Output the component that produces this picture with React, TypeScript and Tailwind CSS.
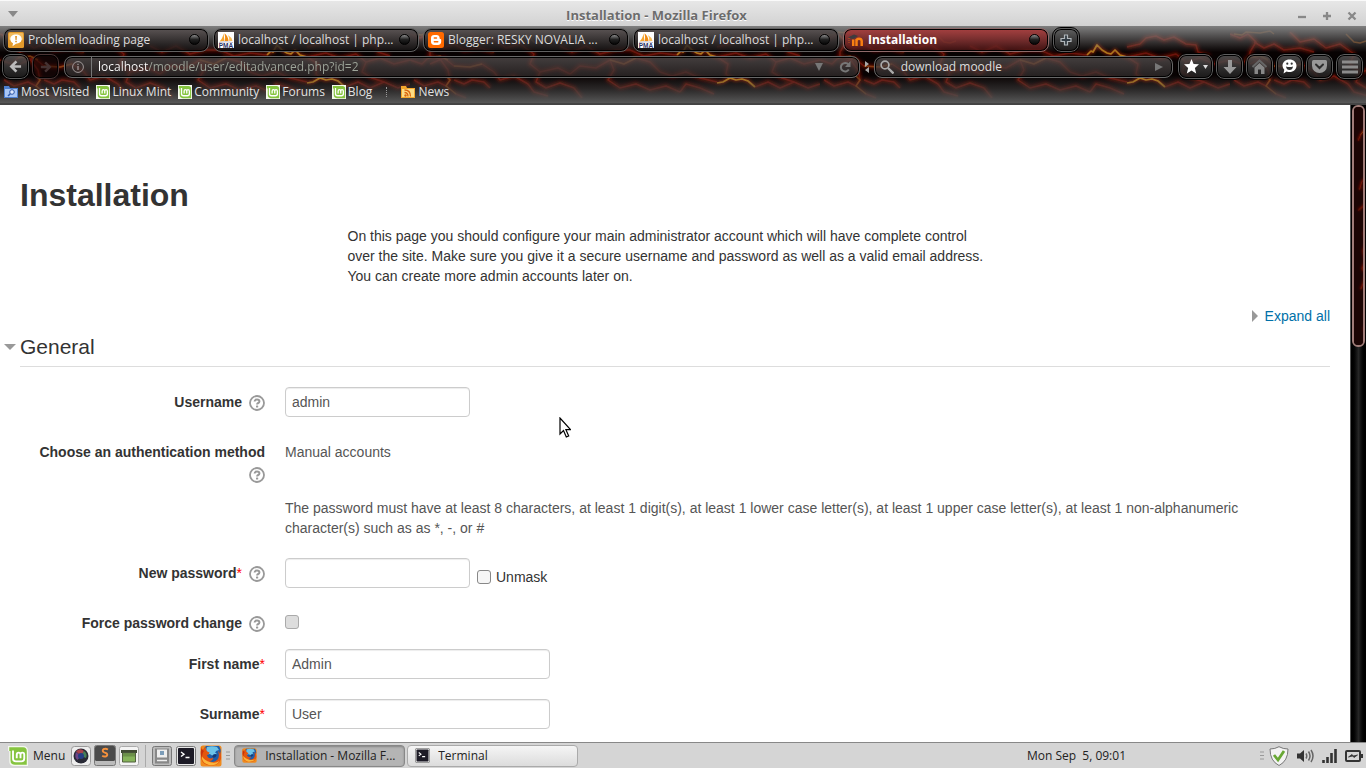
import React from "react";

const BOLTS = [
  "M0 34 L12 38 L20 30 L30 33 L38 44 L40 54 L36 60 L46 68 L56 72",
  "M20 38 L34 32 L44 40 L60 41 L72 38 L84 46 L90 54 L104 50 L118 58 L124 66 L138 70",
  "M60 6 L70 16 L84 13 L96 22 L110 18 L124 28 L120 38 L130 46 L148 42 L160 48",
  "M130 46 L126 56 L136 62 L150 57 L164 62 L172 72",
  "M160 48 L170 40 L186 42 L200 34 L214 38 L226 32 L240 36 L250 46",
  "M150 20 L162 26 L176 20 L190 28 L206 24 L220 24 L234 30 L250 27 L267 29",
  "M200 34 L204 44 L198 54 L210 62 L226 58 L240 64 L256 60 L270 66",
  "M250 46 L262 50 L276 46 L290 52 L307 56",
  "M307 31 L318 38 L316 48 L320 52",
  "M345 61 L358 56 L370 62 L384 56 L398 62 L410 58",
  "M307 21 L320 18 L326 12 L336 10 L344 14 L354 11 L366 18 L376 19 L378 26 L390 30",
  "M307 31 L326 27 L340 32 L356 28 L366 36 L380 32 L394 38 L410 34",
  "M366 36 L362 46 L372 52 L384 56",
  "M24 16 L34 22 L44 18 L54 24 L70 22 L84 26",
  "M44 54 L54 58 L62 54 L74 56 L80 62",
  "M4 54 L14 60 L28 56 L36 60",
  "M0 8 L10 12 L18 8 L26 16 L20 26 L20 30",
  "M270 66 L276 58 L290 62 L304 68",
];
const HOT = [
  "M267 29 L271 25 L273 26 L277 19 L282 24 L287 27 L291 28 L295 24 L300 29 L307 31",
  "M307 57 L313 56 L320 52 L326 54 L332 53 L338 55 L345 61",
];
const WARM = [
  "M44 40 L60 41 L72 38",
  "M36 50 L40 54 L36 60 L46 68",
  "M18 32 L30 30 L38 34",
  "M4 8 L12 9 L16 6 L30 7 L40 5 L44 8",
  "M116 8 L124 16 L130 17 L136 15",
  "M200 34 L214 38 L226 32",
];

function Lava({ id, className, vertical }: { id: string; className: string; vertical?: boolean }) {
  return (
    <svg className={className} width="100%" height="100%" aria-hidden="true">
      <defs>
        <filter id={id + "b"} x="-5%" y="-20%" width="110%" height="140%"><feGaussianBlur stdDeviation="1.8" /></filter>
        <filter id={id + "s"} x="-5%" y="-20%" width="110%" height="140%"><feGaussianBlur stdDeviation=".6" /></filter>
        <pattern id={id} width="410" height="79" patternUnits="userSpaceOnUse" patternTransform={vertical ? "rotate(90) scale(.6)" : undefined}>
          <rect width="410" height="79" fill={vertical ? "#1c0504" : "#080202"} />
          <g fill="none" strokeLinejoin="round">
            <g filter={`url(#${id}b)`} stroke="#6a0d06" strokeWidth="5" opacity=".75">{BOLTS.map((d) => <path key={d} d={d} />)}</g>
            <g filter={`url(#${id}s)`}>
              <g stroke="#8a1c10" strokeWidth="1.5" opacity=".75">{BOLTS.map((d) => <path key={d} d={d} />)}</g>
              <g stroke="#9a5014" strokeWidth="1.5" opacity=".75">{WARM.map((d) => <path key={d} d={d} />)}</g>
            </g>
            <g filter={`url(#${id}b)`} stroke="#9a2008" strokeWidth="3.500" opacity=".9">{HOT.map((d) => <path key={d} d={d} />)}</g>
            <g filter={`url(#${id}s)`} stroke="#c9881c" strokeWidth="1.700">{HOT.map((d) => <path key={d} d={d} />)}</g>
          </g>
        </pattern>
      </defs>
      <rect width="100%" height="100%" fill={`url(#${id})`} />
    </svg>
  );
}

function Mint({ className }: { className: string }) {
  return (
    <svg className={className} viewBox="0 0 16 16" aria-hidden="true">
      <path d="M0 0h12q4 0 4 4v12H5q-4 0-4-4V4H0z" fill="#f4f8ee" />
      <path d="M1 1h11q3 0 3 3v11H5.500q-3.500 0-3.500-3.500V4H1z" fill="#86c440" />
      <path d="M4 3.500v6.500q0 2.300 2.300 2.300h4.400q2.300 0 2.300-2.300V7q0-1.700-1.500-1.700T10 7v2.700M10 7q0-1.700-1.500-1.700T7 7v2.700" fill="none" stroke="#fff" strokeWidth="1.500" />
    </svg>
  );
}

function Warning() {
  return (
    <svg className="size-4 shrink-0" viewBox="0 0 16 16" aria-hidden="true">
      <rect width="16" height="16" rx="1.500" fill="#e39a2c" /><rect x="1" y="1" width="14" height="7" rx="1" fill="#f0b95c" />
      <path d="M8 2.500c3.500 0 5.700 1.900 5.700 4.600S11.500 11.700 8 11.700l-3.500 2.500.5-3C3.300 10.400 2.300 9 2.300 7.100 2.300 4.400 4.500 2.500 8 2.500z" fill="#fff" />
      <path d="M7.200 4h1.700l-.3 4H7.500zM7.300 8.800h1.500v1.400H7.300z" fill="#d98a1c" />
    </svg>
  );
}

function Pma() {
  return (
    <svg className="size-4 shrink-0" viewBox="0 0 16 16" aria-hidden="true">
      <rect width="16" height="16" fill="#fff" />
      <path d="M1.500 9.500Q4.500 7 5.500 1.500L6.500 9z" fill="#f7a52b" /><path d="M7 9Q7.500 5 6.500 1.200q3.500 2.500 4 7.800z" fill="#f08a12" /><path d="M11.200 9q.3-3-1.200-6 3.500 2 4.500 6z" fill="#f9bd5a" />
      <path d="M1 10.500q7-1.500 14 0" stroke="#b9b9c8" fill="none" />
      <text x="8" y="15.700" textAnchor="middle" fontFamily="Liberation Sans, sans-serif" fontWeight="bold" fontSize="6.500" fill="#2d3468">PMA</text>
    </svg>
  );
}

function Blogger() {
  return (
    <svg className="size-4 shrink-0" viewBox="0 0 16 16" aria-hidden="true">
      <rect width="16" height="16" rx="2.500" fill="#ff6a00" />
      <path d="M6.200 3h2.400c1.900 0 3 1.200 3 2.900 0 .8.300 1.100.9 1.100.4 0 .7.300.7.700v2.100c0 2-1.300 3.200-3.200 3.200H6.200C4.200 13 3 11.800 3 9.800V6.200C3 4.200 4.200 3 6.200 3z" fill="#fff" />
      <path d="M6.300 6h2.200M6.300 9.800h3.500" stroke="#ff6a00" strokeWidth="1.400" strokeLinecap="round" />
    </svg>
  );
}

function Moodle() {
  return (
    <svg className="size-4 shrink-0" viewBox="0 0 16 16" aria-hidden="true">
      <path d="M5.200 14V7.500M8.500 14V9q0-2.300 2.500-2.300t2.700 2.300V14M8.500 14V7" stroke="#f98012" strokeWidth="2.500" fill="none" />
      <path d="M0 5.500L6 2.500 10 4 5 7z" fill="#3c3c3f" /><path d="M1 6v5" stroke="#d5641a" strokeWidth=".8" strokeDasharray="1 1" />
    </svg>
  );
}

function Firefox({ className }: { className: string }) {
  return (
    <svg className={className} viewBox="0 0 22 22" aria-hidden="true">
      <rect x=".5" y=".5" width="21" height="21" rx="2.500" fill="#f08a1c" />
      <path d="M6 1h13q2.500 3 1.500 8-2 10-9.500 10T2 10Q2.500 4 6 1z" fill="#1f5da8" />
      <path d="M7 2q5-1.500 10 0l2 3q-3 0-4 2.500 1.500.5 2 2-3-.5-4.500 1.500Q10 8 7.500 9.500 5 7 7 2z" fill="#6cc3e8" />
      <path d="M12 11q2-3 5-1.500-1 3-3.500 3.500z" fill="#123a78" />
      <path d="M1 1.500q.8 2.500 2 3Q4.500 2.500 6.500 2q-1 2 0 3.500 1 1.500 3 2-.5 2-2.500 2.500.5 3 3.500 3.500 2-.2 3-1-1 3.500-4 3.500 4.500 2.500 8-1.500 2.500-3.500.5-8.500 1.500 1 2 3 .3-3-1-5.500Q21.500 8 21 14q-2 6.500-10 6.500Q1.500 20 1 12z" fill="#e4560e" />
      <path d="M1.800 11Q1.500 18 9 20q7 1.200 10.500-4-4 2.600-9 1.200Q4 15.500 1.800 11z" fill="#fbb43a" />
      <path d="M1.200 4Q0 10 2 13q0-5 2-7z" fill="#c8320c" />
    </svg>
  );
}

function Terminal({ className }: { className: string }) {
  return (
    <svg className={className} viewBox="0 0 20 20" aria-hidden="true">
      <rect x=".5" y=".5" width="19" height="19" rx="2" fill="#e8e8e8" stroke="#777" /><rect x="2" y="2" width="16" height="16" rx="1" fill="#1d1b26" />
      <path d="M5 6l3 2.200L5 10.500M9.500 11.500h4" stroke="#fff" strokeWidth="1.400" fill="none" />
    </svg>
  );
}

function Help({ label }: { label: string }) {
  return (
    <a href="#help" aria-label={`Help with ${label}`} className="block size-4 shrink-0">
      <svg viewBox="0 0 16 16" className="size-4" aria-hidden="true">
        <circle cx="8" cy="8" r="7" fill="#fff" stroke="#999" strokeWidth="1.800" />
        <path d="M5.600 6.600Q5.600 4.600 8 4.600t2.400 1.800Q10.400 7.500 9.200 8 8.100 8.500 8.100 9.500" fill="none" stroke="#999" strokeWidth="2" />
        <rect x="7" y="10.500" width="2.200" height="2" rx=".6" fill="#999" />
      </svg>
    </a>
  );
}

const pill = "border border-[#5e5e5e] outline outline-black bg-linear-to-b from-[#5c5c5ccc] to-[#1c1c1cdd] shadow-[inset_0_0_0_1px_#000]";

function Tab({ icon, title, active }: { icon: React.ReactNode; title: string; active?: boolean }) {
  return (
    <div className={"flex h-6 w-[206px] min-w-0 items-center rounded-lg border pr-2 pl-1 shadow-[inset_0_0_0_1px_#000] " + (active ? "border-[#8d6a6a] bg-linear-to-b from-[#a83c3cf0] to-[#4a1212b8]" : "border-[#606060] bg-linear-to-b from-[#544c4cd0] to-[#151313c0]")}>
      <button role="tab" aria-selected={!!active} className={"flex min-w-0 flex-1 items-center gap-1 text-left " + (active ? "font-bold text-white" : "text-[#dcdcdc]")}>
        {icon}
        <span className="truncate leading-5">{title}</span>
      </button>
      <button aria-label={`Close ${title}`} className="ml-1 size-[11px] shrink-0 rounded-full border border-black bg-linear-to-b from-[#909090] via-[#222] to-[#080808]" />
    </div>
  );
}

function NavButton({ label, wide, dim, children }: { label: string; wide?: boolean; dim?: boolean; children: React.ReactNode }) {
  return (
    <button aria-label={label} className={"flex h-[25px] shrink-0 items-center justify-center gap-1 rounded-lg " + (wide ? "w-[35px] " : "w-[27px] ") + (dim ? "border border-[#4a3535] bg-[#1a080890] shadow-[inset_0_0_0_1px_#000]" : pill)}>
      {children}
    </button>
  );
}

function Label({ htmlFor, text, required, help }: { htmlFor?: string; text: string; required?: boolean; help?: boolean }) {
  return (
    <div className="flex w-[245px] shrink-0 flex-wrap items-start justify-end gap-x-[7px] gap-y-[2px] pt-[5px]">
      <label htmlFor={htmlFor} className="font-bold">{text}{required && <span className="font-normal text-[#f00]">*</span>}</label>
      {help && <span className="pt-[3px]"><Help label={text} /></span>}
    </div>
  );
}

const field = "h-[30px] rounded border border-[#ccc] bg-white px-1.5 text-[14px] text-[#555] shadow-[inset_0_1px_1px_#00000013] outline-none";
const box = "size-[14px] shrink-0 appearance-none rounded-[3px] border";
const bar = "flex h-[22px] min-w-0 items-center rounded-lg border border-[#686868] bg-linear-to-b from-[#5b5555b8] to-[#302b2bb8] shadow-[inset_0_0_0_1px_#000]";

export default function App() {
  return (
    <div className="flex h-screen flex-col overflow-hidden bg-white font-['Open_Sans','Noto_Sans',sans-serif] text-[12px]">
      <header className="flex h-[26px] shrink-0 items-center justify-between border-t border-[#fafafa] bg-linear-to-b from-[#e7e7e7] to-[#d2d2d2] px-2">
        <button aria-label="Window menu" className="w-20">
          <svg className="h-[6px] w-[10px]" viewBox="0 0 10 6" aria-hidden="true"><path d="M0 0h10L5 6z" fill="#888" /></svg>
        </button>
        <h1 className="pt-1 pr-[72px] text-[13px] font-bold text-[#6c6c6c] [text-shadow:0_1px_0_#fff]">Installation - Mozilla Firefox</h1>
        <div className="flex items-center justify-end gap-[15px] pt-1 pr-px">
          {[["Minimize", "M1 6h8"], ["Maximize", "M1 5h8M5 1v8"], ["Close", "M1.500 1.500l7 7M8.500 1.500l-7 7"]].map(([n, d]) => (
            <button key={n} aria-label={n}><svg className="size-[10px]" viewBox="0 0 10 10" aria-hidden="true"><path d={d} stroke="#888" strokeWidth="2.300" /></svg></button>
          ))}
        </div>
      </header>

      <div className="relative isolate shrink-0 border-b-2 border-[#444]">
        <Lava id="lava" className="absolute inset-0 -z-20" />
        <div className="absolute inset-0 -z-10 bg-linear-to-b from-[#808080] from-0% via-[#00000020] via-35% to-transparent" />
        <div className="absolute inset-x-0 bottom-0 -z-10 h-7 bg-linear-to-t from-[#585858] via-[#3d3d3da0] to-transparent" />
        <div role="tablist" className="flex h-[27px] items-center gap-1 px-[3px]">
          <Tab icon={<Warning />} title="Problem loading page" />
          <Tab icon={<Pma />} title="localhost / localhost | php..." />
          <Tab icon={<Blogger />} title="Blogger: RESKY NOVALIA ..." />
          <Tab icon={<Pma />} title="localhost / localhost | php..." />
          <Tab icon={<Moodle />} title="Installation" active />
          <button aria-label="New tab" className={"flex h-6 w-[26px] items-center justify-center rounded-lg " + pill}>
            <svg className="size-3" viewBox="0 0 12 12" aria-hidden="true"><path d="M4.500 1h3v3.500H11v3H7.500V11h-3V7.500H1v-3h3.500z" fill="#303a42" stroke="#b0b6ba" strokeWidth="1.200" /></svg>
          </button>
        </div>
        <div className="flex h-[27px] items-center pr-[3px] pl-0.5">
          <div className="flex gap-[3px]">
            <NavButton label="Back"><svg className="size-[13px]" viewBox="0 0 14 14" aria-hidden="true"><path d="M8 1.500L2.500 7 8 12.500M3 7h10" fill="none" stroke="#bbb" strokeWidth="2.800" /></svg></NavButton>
            <NavButton label="Forward" dim><svg className="size-3" viewBox="0 0 14 14" aria-hidden="true"><path d="M6 1.500L11.500 7 6 12.500M11 7H1" fill="none" stroke="#443232" strokeWidth="2.800" /></svg></NavButton>
          </div>
          <div className={bar + " ml-[5px] flex-[804] pr-2"}>
            <svg className="mx-[7px] size-3 shrink-0" viewBox="0 0 12 12" aria-hidden="true"><circle cx="6" cy="6" r="5.400" fill="none" stroke="#a09898" /><path d="M6 5v4M6 2.700v1.400" stroke="#a09898" strokeWidth="1.300" /></svg>
            <span className="h-full w-px shrink-0 bg-[#777]" />
            <input aria-label="Address" defaultValue="localhost/moodle/user/editadvanced.php?id=2" className="ml-[6px] h-5 min-w-0 flex-1 bg-linear-to-r from-white from-[50px] to-[#9ea59a] to-[50px] bg-clip-text text-transparent outline-none" />
            <button aria-label="History" className="mr-4"><svg className="size-2" viewBox="0 0 8 8" aria-hidden="true"><path d="M0 0h8L4 8z" fill="#777" /></svg></button>
            <button aria-label="Reload"><svg className="size-3" viewBox="0 0 12 12" aria-hidden="true"><path d="M9.500 3.500A4.300 4.300 0 1 0 9.800 8.500" fill="none" stroke="#777" strokeWidth="2" /><path d="M11.500 0v6H6z" fill="#777" /></svg></button>
          </div>
          <svg className="mx-1 h-3 w-[6px] shrink-0" viewBox="0 0 6 12" aria-hidden="true"><path d="M1 0l4 3-4 3zM5 6v6L1 9z" fill="#aaa" /></svg>
          <div className={bar + " flex-[294] px-[5px]"}>
            <svg className="size-[14px] shrink-0" viewBox="0 0 14 14" aria-hidden="true"><circle cx="5" cy="5" r="3.900" fill="none" stroke="#aaa" strokeWidth="1.700" /><path d="M8 8l5.500 5.500" stroke="#aaa" strokeWidth="2.300" /></svg>
            <input aria-label="Search" defaultValue="download moodle" className="ml-[7px] h-5 min-w-0 flex-1 bg-transparent text-[#ddd] outline-none" />
            <button aria-label="Go" className="mr-1"><svg className="size-2" viewBox="0 0 8 8" aria-hidden="true"><path d="M0 0l8 4-8 4z" fill="#777" /></svg></button>
          </div>
          <div className="ml-[5px] flex gap-[3px]">
            <NavButton label="Bookmarks" wide>
              <svg className="size-[15px]" viewBox="0 0 16 16" aria-hidden="true"><path d="M8 0l2.200 5.200 5.800.5-4.400 3.800L13 15.500 8 12.300l-5 3.200 1.400-6L0 5.700l5.800-.5z" fill="#fff" /></svg>
              <svg className="h-1 w-[5px]" viewBox="0 0 5 4" aria-hidden="true"><path d="M0 0h5L2.500 4z" fill="#ddd" /></svg>
            </NavButton>
            <NavButton label="Downloads"><svg className="size-[14px]" viewBox="0 0 14 14" aria-hidden="true"><path d="M5 0h4v7h4.500L7 14 .5 7H5z" fill="#999" /></svg></NavButton>
            <NavButton label="Home"><svg className="size-[15px]" viewBox="0 0 15 15" aria-hidden="true"><path d="M.5 8L7.500 1.500l7 6.500" fill="none" stroke="#666" strokeWidth="2" /><path d="M2.500 8.500l5-4.500 5 4.500V15H9v-4.500H6V15H2.500z" fill="#888" /></svg></NavButton>
            <NavButton label="Hello"><svg className="size-[15px]" viewBox="0 0 15 15" aria-hidden="true"><path d="M7.500.5c4 0 7 2.700 7 6.200s-3 6.300-7 6.300c-1 0-2-.1-2.800-.5L1.500 14.500l.8-3.800A6 6 0 0 1 .5 6.700C.5 3.200 3.500.5 7.500.5z" fill="#fff" /><path d="M4 7.500q3.500 1 7 0Q10.500 11 7.500 11T4 7.500z" fill="#333" /><circle cx="5.300" cy="4.700" r="1.100" fill="#333" /><circle cx="9.700" cy="4.700" r="1.100" fill="#333" /></svg></NavButton>
            <NavButton label="Pocket"><svg className="size-[15px]" viewBox="0 0 15 15" aria-hidden="true"><path d="M1.500 1h12Q15 1 15 2.500v4.300a7.500 7.200 0 0 1-15 0V2.500Q0 1 1.500 1z" fill="#999" /><path d="M4 5.500L7.500 9 11 5.500" fill="none" stroke="#2d2d2d" strokeWidth="2" strokeLinecap="round" /></svg></NavButton>
            <NavButton label="Menu"><svg className="h-[14px] w-4" viewBox="0 0 16 14" aria-hidden="true"><path d="M0 2h16M0 7h16M0 12h16" stroke="#8c8c8c" strokeWidth="3" /></svg></NavButton>
          </div>
        </div>
        <nav aria-label="Bookmarks" className="flex h-[23px] items-center gap-[7px] px-1 text-[#e2e2e2]">
          <a href="#visited" className="flex items-center gap-[3px]">
            <svg className="size-[14px]" viewBox="0 0 14 14" aria-hidden="true"><path d="M0 1h5l1 2h8v10H0z" fill="#4d7fd0" /><rect x="1" y="4" width="12" height="8" fill="#a8c6f5" /><circle cx="8" cy="7" r="2.300" fill="#dfeaff" stroke="#2b56a8" /><path d="M6.300 8.700L4 11" stroke="#2b56a8" strokeWidth="1.500" /></svg>Most Visited
          </a>
          {["Linux Mint", "Community", "Forums", "Blog"].map((t) => (
            <a key={t} href={"#" + t} className="flex items-center gap-[2px]"><Mint className="size-[14px] shrink-0 bg-[#f4f8ee]" />{t}</a>
          ))}
          <span className="mx-[7px] h-[10px] border-l border-dotted border-[#999]" />
          <a href="#news" className="flex items-center gap-[3px]">
            <svg className="size-[14px]" viewBox="0 0 14 14" aria-hidden="true"><path d="M0 1h5l1 2h8v10H0z" fill="#f3a72c" /><rect x="1" y="4" width="12" height="8" fill="#fbdc85" /><circle cx="4.500" cy="10.500" r="1.200" fill="#d9640e" /><path d="M3.500 7.500q3.500 0 3.500 4M3.500 5q6 0 6 6.500" fill="none" stroke="#d9640e" strokeWidth="1.300" /></svg>News
          </a>
        </nav>
      </div>

      <div className="flex min-h-0 flex-1">
        <main className="min-w-0 flex-1 overflow-hidden px-5 font-['Liberation_Sans',sans-serif] text-[14px] leading-5 text-[#333]">
          <h2 className="mt-[70px] text-[32px] leading-10 font-bold">Installation</h2>
          <p className="mx-auto mt-[11px] w-1/2 pr-2">On this page you should configure your main administrator account which will have complete control over the site. Make sure you give it a secure username and password as well as a valid email address. You can create more admin accounts later on.</p>
          <div className="mt-5 flex justify-end">
            <a href="#expand" className="flex items-center gap-[7px] text-[#0070a8]"><svg className="h-3 w-[6px]" viewBox="0 0 6 12" aria-hidden="true"><path d="M0 0l6 6-6 6z" fill="#999" /></svg>Expand all</a>
          </div>
          <form>
            <h3 className="border-b border-[#ddd] pt-[2px] text-[21px] leading-[38px]">
              <button type="button" aria-expanded="true" className="-ml-4 flex items-center gap-1"><svg className="h-[6px] w-3" viewBox="0 0 12 6" aria-hidden="true"><path d="M0 0h12L6 6z" fill="#999" /></svg>General</button>
            </h3>
            <div className="mt-5 flex gap-5">
              <Label htmlFor="username" text="Username" help />
              <input id="username" defaultValue="admin" className={field + " w-[185px]"} />
            </div>
            <div className="mt-5 flex gap-5">
              <Label text="Choose an authentication method" help />
              <div className="pt-[5px] text-[#555]">Manual accounts</div>
            </div>
            <div className="mt-[15px] pr-5 pl-[265px] text-[#555]">The password must have at least 8 characters, at least 1 digit(s), at least 1 lower case letter(s), at least 1 upper case letter(s), at least 1 non-alphanumeric character(s) such as as *, -, or #</div>
            <div className="mt-5 flex gap-5">
              <Label htmlFor="password" text="New password" required help />
              <div className="flex items-center gap-[7px]">
                <input id="password" type="password" className={field + " w-[185px]"} />
                <label className="flex items-center gap-[5px] pt-2"><input type="checkbox" className={box + " border-[#888] bg-[#f6f6f6]"} />Unmask</label>
              </div>
            </div>
            <div className="mt-5 flex gap-5">
              <Label htmlFor="force" text="Force password change" help />
              <input id="force" type="checkbox" disabled className={box + " mt-[7px] border-[#aaa] bg-[#ddd]"} />
            </div>
            <div className="mt-4 flex gap-5">
              <Label htmlFor="first" text="First name" required />
              <input id="first" defaultValue="Admin" className={field + " w-[265px]"} />
            </div>
            <div className="mt-5 flex gap-5">
              <Label htmlFor="surname" text="Surname" required />
              <input id="surname" defaultValue="User" className={field + " w-[265px]"} />
            </div>
          </form>
        </main>
        <div className="w-4 shrink-0 border-l border-[#555] bg-linear-to-r from-black via-[#262626] to-black px-px" role="presentation">
          <div className="relative h-[38%] overflow-hidden rounded-md border-2 border-[#a07c78]">
            <Lava id="thumb" vertical className="absolute inset-0" />
          </div>
        </div>
      </div>

      <footer className="flex h-[26px] shrink-0 items-center border-t border-[#888] bg-[#d5d5d5] text-[#222]">
        <button className="flex items-center gap-[5px] pl-2"><Mint className="size-5" />Menu</button>
        <div className="ml-[6px] flex items-center gap-[3px]">
          <button aria-label="Camera"><svg className="size-5" viewBox="0 0 20 20" aria-hidden="true"><rect x=".5" y=".5" width="19" height="19" rx="3" fill="#eee" stroke="#999" /><circle cx="10" cy="10" r="7.500" fill="#292a36" /><path d="M10 10L5 5.500Q9 1.500 13 5z" fill="#a8424c" /><path d="M10 10L5 6q-2 5 1.500 8z" fill="#6d4386" /><path d="M10 10l3-5q4 3 2 7z" fill="#467f57" /><circle cx="10" cy="10" r="3" fill="#253e85" /></svg></button>
          <button aria-label="Sublime Text"><svg className="h-[21px] w-[22px]" viewBox="0 0 22 21" aria-hidden="true"><rect x=".5" y=".5" width="21" height="20" rx="2" fill="#bbb" stroke="#777" /><rect x="1" y="1" width="20" height="15" rx="1.500" fill="#4b4b4b" /><path d="M14 4.500q-2.500-1.400-4.500-.3-1.500 1.600 0 2.800l3 1.300q1.700 1.600-.3 3-2.200.6-4-.6" fill="none" stroke="#f7923c" strokeWidth="1.900" /></svg></button>
          <button aria-label="Files"><svg className="size-5" viewBox="0 0 20 20" aria-hidden="true"><rect x=".5" y=".5" width="19" height="19" rx="2" fill="#f4f4f4" stroke="#aaa" /><rect x="2" y="4" width="16" height="3" fill="#404b32" /><path d="M3.500 7h13v9h-13z" fill="#86b45a" stroke="#51603f" /><path d="M4 7.500h12v3H4z" fill="#6b9148" /></svg></button>
        </div>
        <span className="mx-[6px] h-[22px] border-l border-[#aaa]" />
        <div className="flex items-center gap-1">
          <button aria-label="File manager"><svg className="size-5" viewBox="0 0 20 20" aria-hidden="true"><rect x=".5" y=".5" width="19" height="19" rx="2" fill="#bbb" stroke="#777" /><rect x="3" y="2.500" width="14" height="15" fill="#888" /><rect x="5" y="3.500" width="10" height="8" fill="#eee" /><rect x="8" y="5" width="4" height="4" fill="#7b9cb8" /><path d="M5 14.500h10" stroke="#eee" strokeWidth="1.500" /></svg></button>
          <button aria-label="Open terminal"><Terminal className="size-5" /></button>
          <button aria-label="Firefox"><Firefox className="size-[22px]" /></button>
        </div>
        <svg className="mx-1 h-[9px] w-1" viewBox="0 0 4 9" aria-hidden="true"><path d="M0 1h4M0 4.500h4M0 8h4" stroke="#999" /></svg>
        <div className="flex gap-[2px]">
          <button className="flex h-[22px] w-[171px] items-center gap-2 rounded border border-[#888] bg-[#b4b4b4] px-[7px] shadow-[inset_0_1px_2px_#0004]"><Firefox className="size-[15px] shrink-0" /><span className="truncate">Installation - Mozilla F...</span></button>
          <button className="flex h-[22px] w-[171px] items-center gap-2 rounded border border-[#aaa] bg-linear-to-b from-[#f5f5f5] to-[#dcdcdc] px-[7px]"><Terminal className="size-[15px] shrink-0" />Terminal</button>
        </div>
        <time className="mr-[134px] ml-auto whitespace-pre">Mon Sep  5, 09:01</time>
        <div className="flex items-center gap-2 pr-[3px]">
          <svg className="h-[9px] w-1" viewBox="0 0 4 9" aria-hidden="true"><path d="M0 1h4M0 4.500h4M0 8h4" stroke="#999" /></svg>
          <button aria-label="Updates" className="-ml-[3px]"><svg className="size-5" viewBox="0 0 20 20" aria-hidden="true"><path d="M10 .7Q14 3 19 3q0 12-9 16.500Q1 15 1 3q5 0 9-2.300z" fill="#f3f3f3" stroke="#777" /><path d="M5 9l4 5 6-9" fill="none" stroke="#68a834" strokeWidth="2.800" /></svg></button>
          <button aria-label="Volume"><svg className="h-[14px] w-[17px]" viewBox="0 0 17 14" aria-hidden="true"><path d="M0 4.500h3L7 1v12L3 9.500H0z" fill="#333" /><path d="M9 4.500q1.500 2.500 0 5M11.500 2.500q3 4.500 0 9M14 1q4 6 0 12" fill="none" stroke="#666" strokeWidth="1.500" /></svg></button>
          <button aria-label="Network"><svg className="size-[15px]" viewBox="0 0 15 15" aria-hidden="true"><path d="M1.500 12v3M5.500 9v6M9.500 5v10M13.500 1v14" stroke="#333" strokeWidth="2.600" /></svg></button>
          <button aria-label="Battery"><svg className="h-3 w-[18px]" viewBox="0 0 18 12" aria-hidden="true"><rect x="1" y="1" width="14" height="10" rx="1" fill="none" stroke="#333" strokeWidth="2" /><path d="M16 4h2v4h-2z" fill="#333" /><path d="M3.500 7l3.500-2.500 1.500 1.500L12.500 5 9 7.500 7.500 6z" fill="#333" stroke="#333" strokeWidth=".8" /></svg></button>
        </div>
      </footer>

      <svg className="pointer-events-none absolute top-[417px] left-[559px] h-[21px] w-3" viewBox="0 0 12 21" aria-hidden="true"><path d="M1 1v16l3.500-3.500L7.300 20l2.400-1-2.800-6.300H11.500z" fill="#fff" stroke="#000" strokeWidth="1.200" /></svg>
    </div>
  );
}
